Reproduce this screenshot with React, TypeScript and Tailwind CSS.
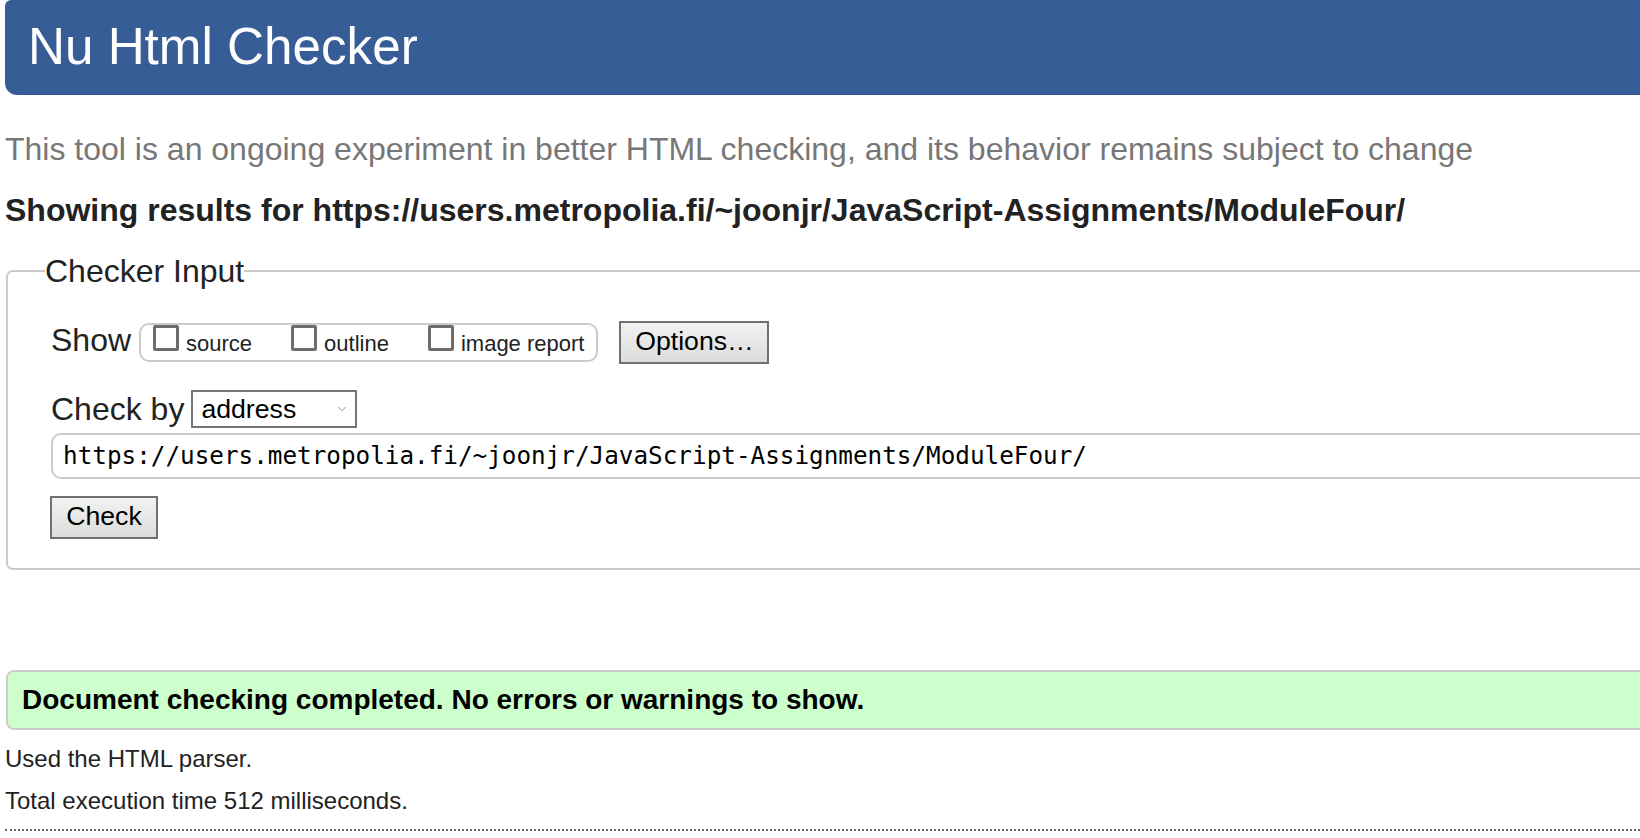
import { ChevronDown } from 'lucide-react'

const sans = { fontFamily: '"Liberation Sans", Arial, sans-serif' }

function Box({ label, last }: { label: string; last?: boolean }) {
  return (
    <span className={last ? '' : 'mr-[39px]'}>
      <span className="inline-block w-[26px] h-[26px] border-[3px] border-[#6d6d6d] rounded-[2px] bg-white align-baseline" />
      <span className="ml-[7px] text-[22px]">{label}</span>
    </span>
  )
}

export default function App() {
  return (
    <div className="w-full h-[838px] overflow-hidden bg-white text-[#222]" style={sans}>
      <div className="w-[1720px] pl-[5px]">
        {/* Header */}
        <div className="h-[95px] bg-[#365d95] rounded-bl-[12px] rounded-tl-[6px] flex items-center pl-[23px]">
          <h1 className="text-white text-[51.2px] leading-none pb-[2px]">Nu Html Checker</h1>
        </div>

        <p className="mt-[35px] text-[32px] leading-[38px] text-[#777]">
          This tool is an ongoing experiment in better HTML checking, and its behavior remains subject to change
        </p>
        <p className="mt-[23px] text-[32px] leading-[38px] font-bold">
          Showing results for https://users.metropolia.fi/~joonjr/JavaScript-Assignments/ModuleFour/
        </p>

        {/* Checker input */}
        <fieldset className="mt-[23px] ml-[1px] border-2 border-[#ccc] rounded-[7px] pl-[43px] pb-[29px]">
          <legend className="-ml-[6px] text-[32px] leading-[38px]">Checker Input</legend>

          <div className="mt-[31px] flex items-center h-[43px]">
            <span className="text-[32px] leading-[38px] pb-[5px]">Show</span>
            <div className="ml-[8px] h-[39px] border-2 border-[#ccc] rounded-[10px] pl-[12px] pr-[12px] leading-[30px] whitespace-nowrap">
              <Box label="source" />
              <Box label="outline" />
              <Box label="image report" last />
            </div>
            <button className="ml-[21px] w-[150px] h-[43px] border-2 border-[#707070] bg-gradient-to-b from-[#f2f2f2] to-[#dcdcdc] text-[26.67px] text-black leading-none pb-[2px]">
              Options…
            </button>
          </div>

          <div className="mt-[26px] flex items-center h-[38px]">
            <span className="text-[32px] leading-[38px]">Check by</span>
            <div className="ml-[7px] w-[166px] h-[38px] border-2 border-[#767676] bg-white flex items-center justify-between pl-[8px] pr-[6px]">
              <span className="text-[26.67px] text-black leading-none">address</span>
              <ChevronDown className="w-[14px] h-[14px] text-[#888]" strokeWidth={1.5} />
            </div>
          </div>

          <div className="mt-[5px] h-[46px] border-2 border-[#ccc] rounded-[10px] flex items-center pl-[10px]">
            <span
              className="text-[24.3px] text-black leading-none whitespace-nowrap"
              style={{ fontFamily: '"DejaVu Sans Mono", "Liberation Mono", monospace' }}
            >
              https://users.metropolia.fi/~joonjr/JavaScript-Assignments/ModuleFour/
            </span>
          </div>

          <button className="mt-[17px] -ml-[1px] w-[108px] h-[43px] border-2 border-[#707070] bg-gradient-to-b from-[#f2f2f2] to-[#dcdcdc] text-[26.67px] text-black leading-none pb-[2px]">
            Check
          </button>
        </fieldset>

        {/* Result */}
        <div className="mt-[100px] ml-[1px] h-[60px] bg-[#ccffcc] border-2 border-[#ccc] rounded-l-[8px] flex items-center pl-[14px]">
          <span className="text-[28px] font-bold text-black leading-none">
            Document checking completed. No errors or warnings to show.
          </span>
        </div>

        <p className="mt-[15px] text-[24px] leading-[28px]">Used the HTML parser.</p>
        <p className="mt-[14px] text-[24px] leading-[28px]">Total execution time 512 milliseconds.</p>
        <div className="mt-[14px] border-b-2 border-dotted border-[#666]" />
      </div>
    </div>
  )
}
